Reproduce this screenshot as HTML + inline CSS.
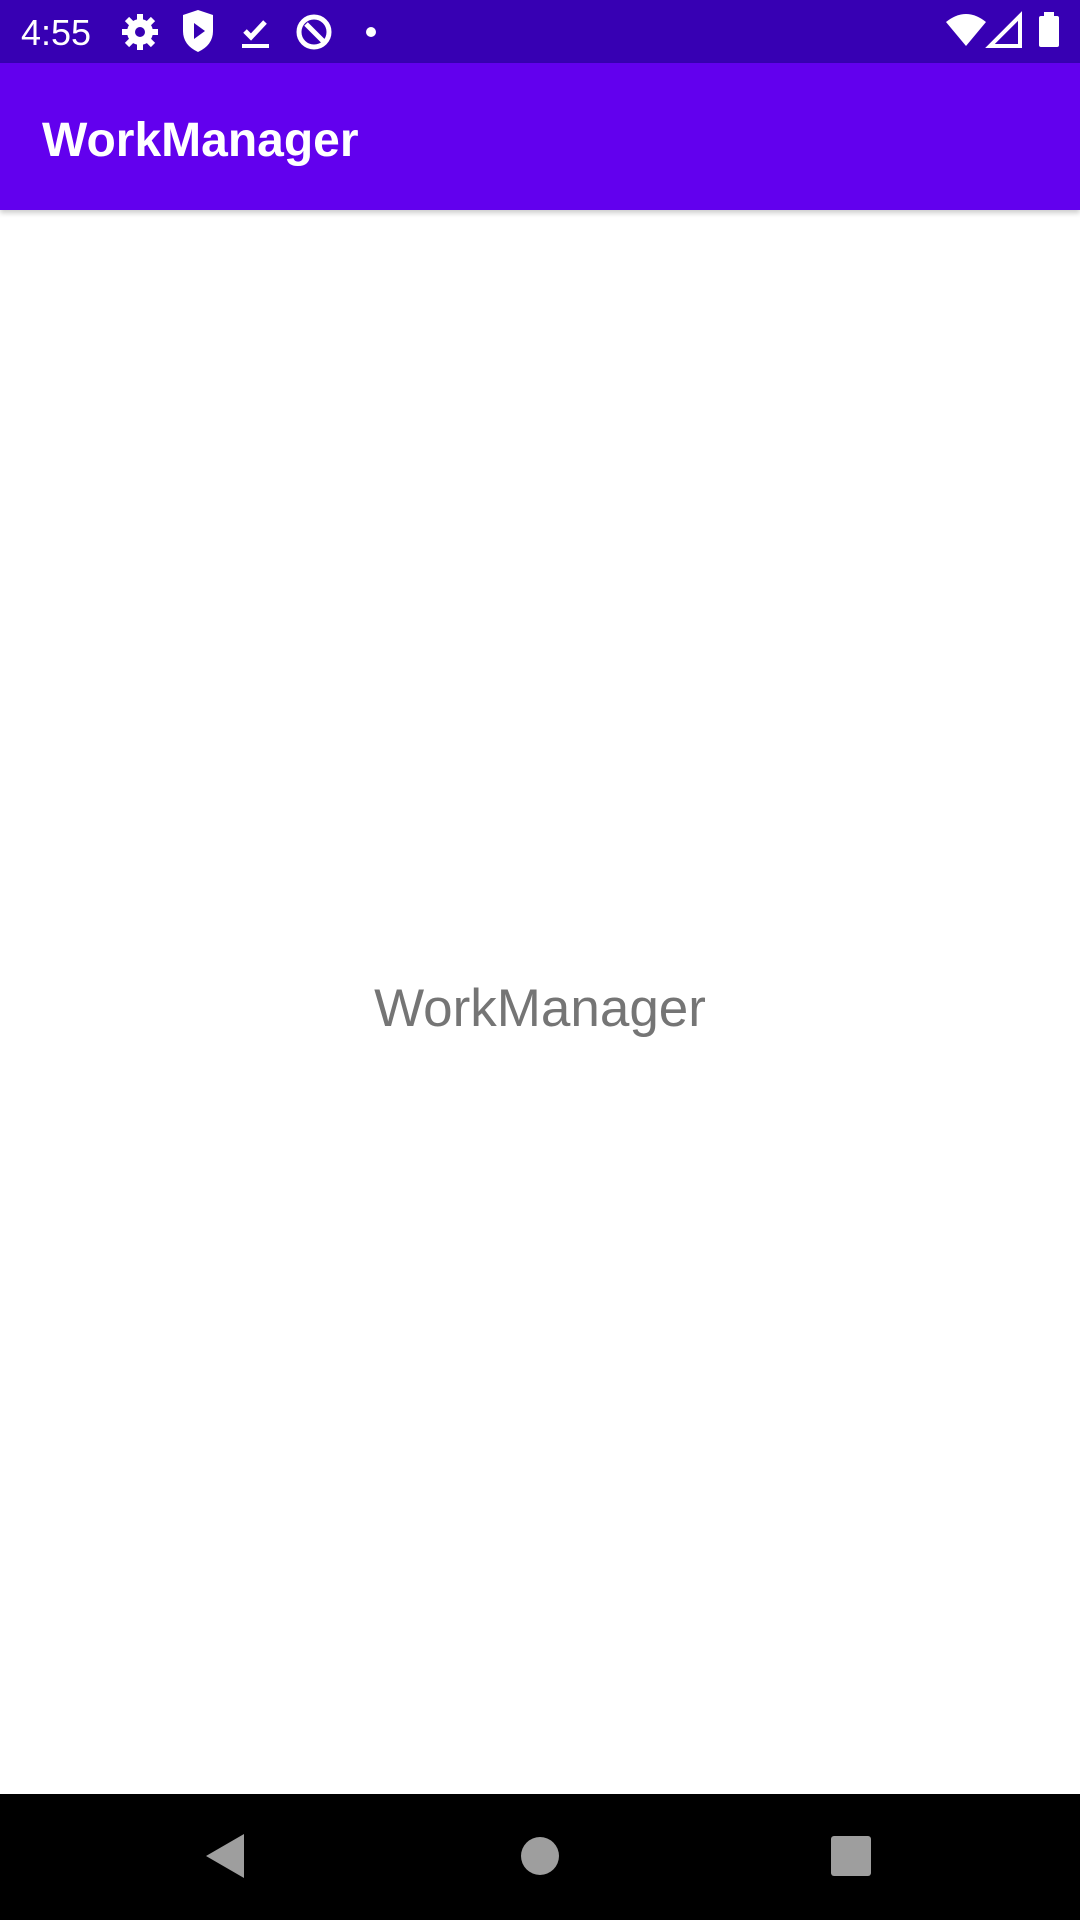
<!DOCTYPE html>
<html><head><meta charset="utf-8"><style>
html,body{margin:0;padding:0;width:1080px;height:1920px;overflow:hidden;background:#fff;font-family:"Liberation Sans",Roboto,sans-serif}
.sb{position:absolute;left:0;top:0;width:1080px;height:63px;background:#3700b3;color:#fff}
.ab{position:absolute;left:0;top:63px;width:1080px;height:147px;background:#6200ee;box-shadow:0 3px 5px rgba(0,0,0,0.2)}
.ab span{position:absolute;left:42px;top:50px;font-size:48px;color:#fff;font-weight:bold;letter-spacing:0px}
.center{position:absolute;left:0;width:1080px;top:978px;text-align:center;font-size:53px;color:#757575}
.nav{position:absolute;left:0;top:1794px;width:1080px;height:126px;background:#000}
</style></head><body>
<div class="sb">
<span style="position:absolute;left:21px;top:12px;font-size:36px">4:55</span>
<svg width="1080" height="63" style="position:absolute;left:0;top:0">
<g fill="#fff">
<circle cx="140" cy="32" r="13"/>
<g stroke="#fff" stroke-width="6"><line x1="140" y1="14" x2="140" y2="50"/><line x1="122" y1="32" x2="158" y2="32"/><line x1="127" y1="19" x2="153" y2="45"/><line x1="153" y1="19" x2="127" y2="45"/></g>
<circle cx="140" cy="32" r="5" fill="#3700b3"/>
<path d="M183 15 L198 10 L213 15 L213 31 Q213 45 198 52 Q183 45 183 31 Z"/>
<path d="M194 23 L205 31 L194 39 Z" fill="#3700b3"/>
<path d="M245 31 L251 37 L265 22" stroke="#fff" stroke-width="5" fill="none"/>
<rect x="242" y="44" width="27" height="4"/>
<circle cx="314" cy="32" r="15" stroke="#fff" stroke-width="5" fill="none"/>
<line x1="306" y1="24" x2="326" y2="44" stroke="#fff" stroke-width="5"/>
<circle cx="371" cy="32" r="5"/>
<path d="M946 22 Q966 6 986 22 L966 46 Z"/>
<path d="M1020 16 L1020 46 L990 46 Z" fill="none" stroke="#fff" stroke-width="4"/>
<rect x="1039" y="16" width="20" height="31" rx="2"/>
<rect x="1044" y="12" width="10" height="5"/>
</g></svg>
</div>
<div class="ab"><span>WorkManager</span></div>
<div class="center">WorkManager</div>
<div class="nav"><svg width="1080" height="126">
<path d="M206 62 L244 40 L244 84 Z" fill="#9e9e9e"/>
<circle cx="540" cy="62" r="19" fill="#9e9e9e"/>
<rect x="831" y="42" width="40" height="40" rx="3" fill="#9e9e9e"/>
</svg></div>
</body></html>
